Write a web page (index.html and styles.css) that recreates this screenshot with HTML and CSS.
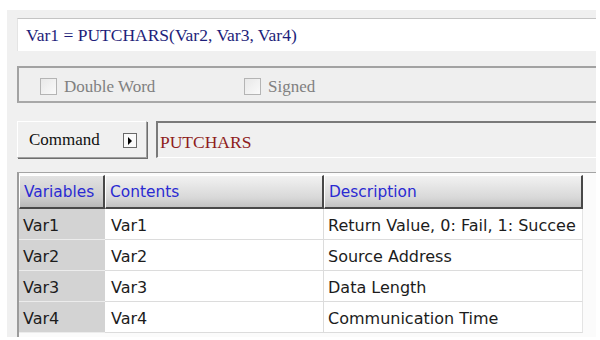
FILE: index.html
```html
<!DOCTYPE html>
<html>
<head>
<meta charset="utf-8">
<link rel="stylesheet" href="styles.css">
</head>
<body>
<div class="panel">
  <div class="formula">Var1 = PUTCHARS(Var2, Var3, Var4)</div>
  <div class="options">
    <label class="check"><span class="box"></span>Double Word</label>
    <label class="check"><span class="box"></span>Signed</label>
  </div>
  <div class="command-row">
    <div class="cmd-btn">
      <span class="cmd-label">Command</span>
      <span class="arrow"><svg width="6" height="8" viewBox="0 0 6 8"><path d="M1 0 L5 4 L1 8 Z" fill="#000"/></svg></span>
    </div>
    <div class="cmd-field">PUTCHARS</div>
  </div>
  <div class="table-area">
    <div class="grid">
      <div class="th th-var">Variables</div>
      <div class="th">Contents</div>
      <div class="th">Description</div>

      <div class="td td-var">Var1</div>
      <div class="td td-con">Var1</div>
      <div class="td td-desc">Return Value, 0: Fail, 1: Succee</div>

      <div class="td td-var">Var2</div>
      <div class="td td-con">Var2</div>
      <div class="td td-desc">Source Address</div>

      <div class="td td-var">Var3</div>
      <div class="td td-con">Var3</div>
      <div class="td td-desc">Data Length</div>

      <div class="td td-var">Var4</div>
      <div class="td td-con">Var4</div>
      <div class="td td-desc">Communication Time</div>
    </div>
  </div>
</div>
</body>
</html>
```
FILE: styles.css
```css
html, body {
  margin: 0;
  background: #ffffff;
}
.panel {
  margin: 10px 0 0 7px;
  width: 589px;
  height: 327px;
  box-sizing: border-box;
  background: #f0f0f0;
  padding: 8px 0 0 10px;
  display: flex;
  flex-direction: column;
}
.formula {
  height: 33px;
  box-sizing: border-box;
  border-top: 1px solid #c4c4c4;
  border-left: 1px solid #e4e4e4;
  background: #ffffff;
  padding-left: 8px;
  font-family: "Liberation Serif", serif;
  font-size: 17.5px;
  line-height: 33px;
  color: #1e1e7a;
  margin-bottom: 15px;
}
.options {
  height: 37px;
  box-sizing: border-box;
  border-top: 2px solid #a2a2a2;
  border-left: 2px solid #a2a2a2;
  border-bottom: 2px solid #a8a8a8;
  background: #efefef;
  display: flex;
  align-items: center;
  padding-left: 21px;
  padding-top: 4px;
  margin-bottom: 18px;
}
.check {
  display: flex;
  align-items: center;
  gap: 7px;
  width: 204px;
  font-family: "Liberation Serif", serif;
  font-size: 17px;
  color: #808080;
}
.box {
  width: 17px;
  height: 17px;
  box-sizing: border-box;
  border: 1px solid #b4b4b4;
  background: linear-gradient(135deg, #e8e8e8, #fafafa);
}
.command-row {
  display: flex;
  height: 37px;
  margin-bottom: 14px;
}
.cmd-btn {
  width: 130px;
  box-sizing: border-box;
  border-top: 1px solid #ffffff;
  border-left: 1px solid #ffffff;
  border-right: 1px solid #a0a0a0;
  border-bottom: 1px solid #a0a0a0;
  box-shadow: 1px 1px 0 #6e6e6e;
  background: #f0f0f0;
  display: flex;
  align-items: center;
  padding-left: 11px;
  padding-right: 9px;
}
.cmd-label {
  font-family: "Liberation Serif", serif;
  font-size: 17px;
  color: #111;
  flex: 1;
}
.arrow {
  width: 14px;
  height: 15px;
  box-sizing: border-box;
  border: 1px solid #6a6a6a;
  background: #fafafa;
  display: flex;
  align-items: center;
  justify-content: center;
  margin-top: 2px;
}
.arrow svg {
  display: block;
}
.cmd-field {
  flex: 1;
  margin-left: 9px;
  box-sizing: border-box;
  border-top: 2px solid #7a7a7a;
  border-left: 2px solid #7a7a7a;
  border-bottom: 1px solid #ffffff;
  background: #f0f0f0;
  padding-left: 2px;
  font-family: "Liberation Serif", serif;
  font-size: 17.5px;
  line-height: 38px;
  color: #8e1d1d;
}
.table-area {
  flex: 1;
  border-top: 1px solid #a4a4a4;
  border-left: 2px solid #9c9c9c;
  background: #fbfbfb;
  padding-top: 2px;
}
.grid {
  display: grid;
  grid-template-columns: 86px 219px 259px;
  grid-auto-rows: 31px;
  grid-template-rows: 34px;
  font-family: "DejaVu Sans", sans-serif;
  font-size: 16px;
}
.th {
  box-sizing: border-box;
  border-top: 1px solid #ffffff;
  border-left: 1px solid #ffffff;
  border-right: 2px solid #484848;
  border-bottom: 2px solid #484848;
  background: linear-gradient(#f2f2f2, #d8d8d8 70%, #c2c2c2);
  color: #2a2ad2;
  font-size: 15.4px;
  padding-left: 4px;
  display: flex;
  align-items: center;
  white-space: nowrap;
  overflow: hidden;
}
.th-var {
  background: linear-gradient(#e2e2e2, #cccccc 70%, #b8b8b8);
}
.td {
  box-sizing: border-box;
  border-bottom: 1px solid #dcdcdc;
  display: flex;
  align-items: center;
  padding-top: 2px;
  color: #1c1c1c;
  white-space: nowrap;
  overflow: hidden;
}
.td-var {
  background: #d3d3d3;
  border-bottom-color: #ececec;
  padding-left: 4px;
}
.td-con {
  background: #ffffff;
  padding-left: 6px;
  border-right: 1px solid #dcdcdc;
}
.td-desc {
  background: #ffffff;
  padding-left: 4px;
  border-right: 1px solid #e4e4e4;
}
```
